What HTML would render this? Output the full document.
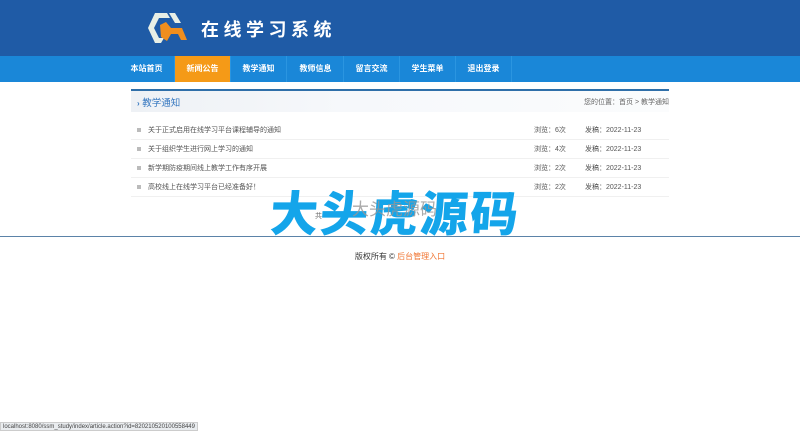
<!DOCTYPE html>
<html><head><meta charset="utf-8"><style>
*{margin:0;padding:0;box-sizing:border-box}
body{width:800px;height:431px;overflow:hidden;background:#fff;font-family:"Liberation Sans","Noto Sans CJK SC",sans-serif;position:relative}
.hd{position:absolute;left:0;top:0;width:800px;height:56px;background:#1f5ba6}
.title{position:absolute;left:201px;top:16px;color:#fff;font-size:18px;font-weight:bold;letter-spacing:4.5px}
.nav{position:absolute;left:0;top:56px;width:800px;height:26px;background:#1a87d8}
.nav a{position:absolute;top:0;width:56px;height:26px;line-height:26px;text-align:center;color:#fff;font-size:8px;font-weight:bold;border-right:1px solid #2b95e0}
.nav a.on{background:#f59a17}
.ph{position:absolute;left:131px;top:89px;width:538px;height:23px;border-top:2px solid #2f6fa9;background:linear-gradient(90deg,#eef1f5 0,#f6f8fb 40%,#fbfcfd 100%)}
.ph .t{position:absolute;left:6px;top:4px;font-size:9.5px;color:#3577c0}
.ph .r{position:absolute;right:0;top:6px;font-size:7px;color:#666}
.row{position:absolute;left:131px;width:538px;height:19px;border-bottom:1px solid #f0f0f0;font-size:7px;color:#555;line-height:19px}
.row i{position:absolute;left:6px;top:7px;width:4px;height:4px;background:#bbb}
.row .a{position:absolute;left:17px}
.row .b{position:absolute;left:403px}
.row .c{position:absolute;left:454px}
.line{position:absolute;left:0;top:236px;width:800px;height:1px;background:#5b83a8}
.cp{position:absolute;left:0;width:800px;top:251px;text-align:center;font-size:8px;color:#333}
.cp span{color:#f07430}
.wm{position:absolute;left:270px;top:188px;font-size:48px;font-weight:900;color:#14a5ea;letter-spacing:2px;line-height:56px;transform:skewX(-4deg)}
.wm2{position:absolute;left:352px;top:200px;font-size:17px;color:rgba(150,150,150,.8);line-height:20px}
.sb{position:absolute;left:0;top:422px;height:9px;padding:0 2px;background:#e9ecef;border:1px solid #ccc;font-size:6px;color:#444;line-height:8px}
</style></head><body>
<div class="hd">
<svg style="position:absolute;left:147px;top:11px" width="42" height="34" viewBox="0 0 42 34">
<polygon points="8,2 20,2 23,7 12,7 7,17 12,27 17,27 14,32 8,32 1,17" fill="#e8efe6"/>
<polygon points="22,2 28,2 34,12 28,12" fill="#e8efe6"/>
<polygon points="13,14 19,11 24,17 35,17 40,29 34,29 31,23 24,23 20,30 14,26" fill="#f08e1d"/>
</svg>
<div class="title">在线学习系统</div>
</div>
<div class="nav">
<a style="left:119px">本站首页</a><a class="on" style="left:175px">新闻公告</a><a style="left:231px">教学通知</a><a style="left:288px">教师信息</a><a style="left:344px">留言交流</a><a style="left:400px">学生菜单</a><a style="left:456px">退出登录</a>
</div>
<div class="ph"><div class="t"><b style="font-size:8px">›</b> 教学通知</div><div class="r">您的位置：首页 &gt; 教学通知</div></div>
<div class="row" style="top:121px"><i></i><span class="a">关于正式启用在线学习平台课程辅导的通知</span><span class="b">浏览：6次</span><span class="c">发稿：2022-11-23</span></div>
<div class="row" style="top:140px"><i></i><span class="a">关于组织学生进行网上学习的通知</span><span class="b">浏览：4次</span><span class="c">发稿：2022-11-23</span></div>
<div class="row" style="top:159px"><i></i><span class="a">新学期防疫期间线上教学工作有序开展</span><span class="b">浏览：2次</span><span class="c">发稿：2022-11-23</span></div>
<div class="row" style="top:178px"><i></i><span class="a">高校线上在线学习平台已经准备好！</span><span class="b">浏览：2次</span><span class="c">发稿：2022-11-23</span></div>
<div style="position:absolute;left:315px;top:211px;font-size:7px;color:#666">共</div>
<div class="line"></div>
<div class="wm">大头虎源码</div>
<div class="wm2">大头虎源码</div>
<div class="cp">版权所有 © <span>后台管理入口</span></div>
<div class="sb">localhost:8080/ssm_study/index/article.action?id=820210520100558449</div>
</body></html>
